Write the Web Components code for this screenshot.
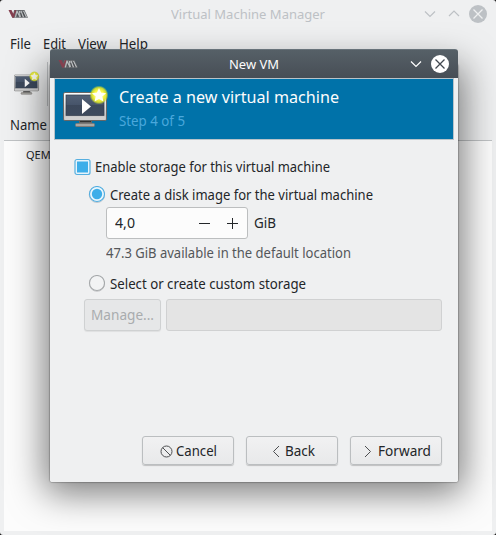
<!DOCTYPE html>
<html lang="en"><head><meta charset="utf-8"><title>Virtual Machine Manager</title>
<style>body{margin:0;background:#111;font:14px/18px "Noto Sans",sans-serif;color:#232629;overflow:hidden}</style></head>
<body><vm-manager></vm-manager>
<script>
const define=(name,html,init)=>customElements.define(name,class extends HTMLElement{
  connectedCallback(){ if(this.shadowRoot)return; const r=this.attachShadow({mode:'open'}); r.innerHTML=html; if(init)init(this,r); }
});
// Text condensed horizontally so that it fills the given advance width.
define('fit-text',`<style>:host{display:inline-block;white-space:pre;flex:none}span{display:inline-block;transform-origin:0 50%}</style><span><slot></slot></span>`,(el,r)=>{
  const s=r.querySelector('span'),w=+el.getAttribute('w');
  el.style.width=w+'px';
  s.style.transform='scaleX('+w/s.getBoundingClientRect().width+')';
});
define('vmm-logo',`<style>:host{display:block;width:20px;height:10px}svg{display:block}</style>
<svg width="20" height="10" fill="none" stroke-linejoin="round"><path d="M6 1h10.500L20 8.800H4.500z" fill="#66696c"/><path d="M.500 1h3l2 4 1.500-4h1.500L6 8.800H4.200z" fill="#84404f"/><path d="M7.300 8.300 9 2l3 6.300M12.300 8 11.500 2M15.500 8.300 13 2M18.500 8.300 15.500 2" stroke="#b9bcbe" stroke-width="1.200"/><path d="M10 7.500 9.500 5.500M13.800 8 12.500 4M17 8 14.800 3" stroke="#414447" stroke-width=".8"/></svg>`);
define('vm-icon',`<style>:host{display:block}svg{display:block;width:100%;height:100%}</style>
<svg viewBox="0 0 46 43"><defs><linearGradient id="f" x2="0" y2="1"><stop stop-color="#fff"/><stop offset="1" stop-color="#bbb"/></linearGradient><linearGradient id="s" x2="0" y2="1"><stop stop-color="#536176"/><stop offset=".49" stop-color="#46546a"/><stop offset=".5" stop-color="#3c485b"/><stop offset="1" stop-color="#3d4a5d"/></linearGradient><radialGradient id="g"><stop offset=".5" stop-color="#fcf94a"/><stop offset=".78" stop-color="#dce42c" stop-opacity=".9"/><stop offset="1" stop-color="#bfd52b" stop-opacity="0"/></radialGradient></defs>
<path d="M16 35h13v4H16z" fill="#666"/><path d="M17 35h11v1H17z" fill="#333"/><rect x="12.500" y="37.500" width="19" height="3" rx="1" fill="#a9a7a4" stroke="#7c7a78"/><rect x=".5" y="6.500" width="43" height="28" rx="1.500" fill="url(#f)" stroke="#666"/><path d="M1.500 30.500h41V34h-41z" fill="#d0d0d0"/><rect x="3" y="9" width="38" height="20.500" fill="url(#s)" stroke="#333e4d" stroke-width=".7"/><path d="M19 13v15l9-7.500z" fill="#fff"/><circle cx="36" cy="9" r="9.500" fill="url(#g)"/><path d="m36 2 2.100 4.600 5 .6-3.700 3.400 1 5-4.400-2.500-4.400 2.500 1-5-3.700-3.400 5-.6z" fill="#fffff5"/></svg>`);
define('win-controls',`<style>:host{display:flex;align-items:center;gap:6px;color:#bdc1c5;--x:#eff0f1}svg{display:block}:host([dark]){color:#fff;--x:#414850}:host([dark]) .up{display:none}</style>
<svg width="18" height="18"><path d="m4 6.500 5 5 5-5" fill="none" stroke="currentColor" stroke-width="1.200"/></svg><svg class="up" width="18" height="18"><path d="m4 11 5-5 5 5" fill="none" stroke="currentColor" stroke-width="1.200"/></svg><svg width="18" height="18"><circle cx="9" cy="9" r="9" fill="currentColor"/><path d="m4.500 4.500 9 9m0-9-9 9" stroke="var(--x)" stroke-width="1.300"/></svg>`);
define('choice-row',`<style>:host{display:flex;align-items:center;height:18px}svg{display:block;margin-right:5px}:host([type=check]) svg{margin:0 4px 0 -.500px}.d,:host([type=radio]) .c{display:none}:host([type=radio][checked]) .r{display:block}:host([type=radio]:not([checked])) .e{display:block}</style>
<svg class="c" width="17" height="18"><rect x="1" y="1.500" width="15" height="15" rx="2" fill="#e8f4fb" stroke="#56afe0" stroke-width="1.200"/><rect x="3" y="3.500" width="11" height="11" fill="#3daee9"/></svg>
<svg class="d r" width="17" height="18"><circle cx="9" cy="8.800" r="7.800" fill="none" stroke="#c5cbd0"/><circle cx="9" cy="8" r="7.500" fill="#e9f6fc" stroke="#52ade0" stroke-width="1.100"/><circle cx="9" cy="8" r="5.200" fill="#3daee9"/></svg>
<svg class="d e" width="17" height="18"><circle cx="9" cy="8.800" r="7.600" fill="none" stroke="#c9cbcd"/><circle cx="9" cy="8" r="7.500" fill="#f2f3f4" stroke="#a6a9ab" stroke-width="1.100"/></svg><slot></slot>`);
define('push-button',`<style>:host{display:flex;box-sizing:border-box;align-items:center;justify-content:center;gap:3px;width:92px;height:29px;padding-top:1px;border:1px solid #bbbec0;border-radius:3px;background:linear-gradient(#f1f1f2,#e8e9ea);box-shadow:0 1px 1px #0003}:host([disabled]){width:77px;height:32px;padding:0;color:#a9acae;border-color:#cfd1d2;background:#e6e7e8;box-shadow:0 1px 1px #0001}</style><slot></slot>`);
define('size-spin',`<style>:host{display:flex;box-sizing:border-box;align-items:center;width:142px;height:32px;padding:0 7px 0 8px;border:1px solid #bcbebf;border-radius:3px;background:#fcfcfc}svg{margin-left:auto}</style><slot></slot><svg width="42" height="16"><path d="M1 8.500h11M29 8.500h11M34.500 3v11" stroke="#232629" stroke-width="1"/></svg>`);
define('new-vm-dialog',`<style>
:host{display:block;width:408px;height:433px;background:#eff0f1;border-radius:3px 3px 2px 2px;overflow:hidden}
.title{display:grid;grid-template-columns:1fr auto 1fr;align-items:center;box-sizing:border-box;height:29px;padding:0 9px 1px 8px;background:linear-gradient(#566067,#474e56);color:#fcfcfc;border-top:1px solid #68737a;font-size:13.33px}
win-controls{justify-self:end}
.banner{display:flex;box-sizing:border-box;height:62px;margin:0 4px;padding:7px 8px;border:1px solid #b8c3ca;background:#0072a9;color:#fcfcfc}
vm-icon{width:46px;height:43px;margin-right:10px}
.head{font-size:16.500px;line-height:22px}.step{color:#4aa8dc;line-height:18px;margin-top:4px}
.heads{display:flex;flex-direction:column}
.page{display:flex;flex-direction:column;padding:18px 16px 0 24px}
.sub{margin:10px 0 0 14px}.spin{display:flex;align-items:center;gap:6px;margin:3px 0 0 32px}
.info{margin:5px 0 0 32px;color:#54575a;height:18px}.other{margin:13px 0 0 14px}
.store{display:flex;gap:5px;margin:6px 0 0 10px}.path{flex:1;height:30px;border:1px solid #d0d1d2;border-radius:3px;background:#e4e4e4}
.actions{display:flex;gap:12px;margin:105px 16px 0 92px}
</style>
<div class="title"><vmm-logo></vmm-logo><fit-text w="50">New VM</fit-text><win-controls dark></win-controls></div>
<div class="banner"><vm-icon></vm-icon><div class="heads"><fit-text class="head" w="220">Create a new virtual machine</fit-text><fit-text class="step" w="66">Step 4 of 5</fit-text></div></div>
<div class="page">
<choice-row type="check" checked><fit-text w="235">Enable storage for this virtual machine</fit-text></choice-row>
<choice-row class="sub" type="radio" checked><fit-text w="263">Create a disk image for the virtual machine</fit-text></choice-row>
<div class="spin"><size-spin><fit-text w="20">4,0</fit-text></size-spin><fit-text w="22">GiB</fit-text></div>
<div class="info"><fit-text w="245">47.3 GiB available in the default location</fit-text></div>
<choice-row class="other" type="radio"><fit-text w="196">Select or create custom storage</fit-text></choice-row>
<div class="store"><push-button disabled><fit-text w="63">Manage...</fit-text></push-button><div class="path"></div></div>
</div>
<div class="actions">
<push-button><svg width="13" height="13" fill="none" stroke="#4d4f51"><circle cx="6.500" cy="6.500" r="5.500"/><path d="m2.600 2.600 7.800 7.800"/></svg><fit-text w="41">Cancel</fit-text></push-button>
<push-button><svg width="13" height="13" fill="none" stroke="#4d4f51"><path d="M10 1 4.500 6.500 10 12"/></svg><fit-text w="30">Back</fit-text></push-button>
<push-button><svg width="13" height="13" fill="none" stroke="#4d4f51"><path d="m3 1 5.500 5.500L3 12"/></svg><fit-text w="53">Forward</fit-text></push-button>
</div>`);
define('vm-manager',`<style>
:host{display:flex;flex-direction:column;position:relative;box-sizing:border-box;width:496px;height:535px;padding:0 4px 4px;background:#eff0f1;border-radius:3px;overflow:hidden}
.title{display:grid;grid-template-columns:1fr auto 1fr;align-items:center;box-sizing:border-box;height:29px;padding:0 5px 1px 4px;color:#bdc1c5;font-size:13.33px}
win-controls{justify-self:end}
.menu{display:flex;gap:12px;height:30px;align-items:center;padding-left:6px}
.tools{display:flex;align-items:center;height:50px;padding-left:10px}.tools vm-icon{width:26px;height:25px;margin-top:-2px}.sep{width:1px;height:44px;margin-left:7px;background:#bfc2c4}
.col{display:flex;align-items:center;height:31px;padding-left:6px;border-bottom:1px solid #c0c3c5}
.list{flex:1;padding:5px 0 0 22px;background:#fcfcfc;font-size:11px;color:#232629}
.shade{position:absolute;left:50px;top:64px;width:408px;height:418px;border-radius:3px;box-shadow:0 0 1px 1px #0003,0 6px 36px 5px #00000085}
new-vm-dialog{position:absolute;left:50px;top:49px}
</style>
<div class="title"><vmm-logo></vmm-logo><fit-text w="154">Virtual Machine Manager</fit-text><win-controls></win-controls></div>
<div class="menu"><fit-text w="21">File</fit-text><fit-text w="23">Edit</fit-text><fit-text w="29">View</fit-text><fit-text w="29">Help</fit-text></div>
<div class="tools"><vm-icon></vm-icon><div class="sep"></div></div>
<div class="col"><fit-text w="37">Name</fit-text></div>
<div class="list">QEM</div>
<div class="shade"></div><new-vm-dialog></new-vm-dialog>`);
</script></body></html>
